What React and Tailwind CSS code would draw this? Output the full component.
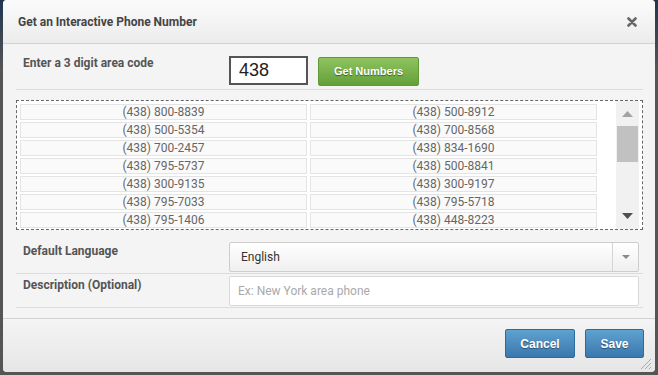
import React from "react";

const numbers = [
  ["(438) 800-8839", "(438) 500-8912"],
  ["(438) 500-5354", "(438) 700-8568"],
  ["(438) 700-2457", "(438) 834-1690"],
  ["(438) 795-5737", "(438) 500-8841"],
  ["(438) 300-9135", "(438) 300-9197"],
  ["(438) 795-7033", "(438) 795-5718"],
  ["(438) 795-1406", "(438) 448-8223"],
];

export default function App() {
  return (
    <div
      className="w-[658px] h-[375px] px-[3px] pb-[3px] bg-[linear-gradient(to_bottom,#1f3550,#555_70px)] overflow-hidden"
      style={{ fontFamily: "Roboto, 'Liberation Sans', sans-serif" }}
    >
      <div className="w-[652px] h-[372px] rounded-[4px] bg-[#f4f4f4] flex flex-col overflow-hidden relative">
        {/* header */}
        <div className="h-[44px] shrink-0 flex items-center justify-between pl-[15px] pr-[13px] border-b border-[#d2d2d2] bg-[linear-gradient(to_bottom,#fbfbfb,#ececec)]">
          <span className="text-[12px] font-bold text-[#444] mt-[1px]">Get an Interactive Phone Number</span>
          <svg width="10" height="10" viewBox="0 0 10 10" className="mt-[1px] mr-[5px]">
            <path d="M1.5 1.5 L8.5 8.5 M8.5 1.5 L1.5 8.5" stroke="#666" strokeWidth="2.6" strokeLinecap="round" />
          </svg>
        </div>

        {/* body */}
        <div className="flex-1 pl-[13px] pr-[12px]">
          <div className="flex items-start pl-[7px] pt-[12px] h-[46px] border-b border-[#dcdcdc]">
            <span className="w-[206px] text-[12px] font-bold text-[#555] leading-[14px]">Enter a 3 digit area code</span>
            <div
              className="w-[79px] h-[29px] border-2 border-[#555] bg-white flex items-center pl-[8px] text-[18px] text-[#222]"
              style={{ fontFamily: "'Liberation Sans', Arial, sans-serif" }}
            >
              438
            </div>
            <button
              className="ml-[10px] mt-[1px] w-[101px] h-[29px] rounded-[2px] border border-[#5f9a37] bg-[linear-gradient(to_bottom,#8fc35f,#64a03a)] text-white text-[11px] font-bold [text-shadow:0_1px_1px_rgba(0,0,0,0.45)]"
              style={{ fontFamily: "'Liberation Sans', Arial, sans-serif" }}
            >
              Get Numbers
            </button>
          </div>

          <div className="mt-[10px] h-[130px] border border-dashed border-[#666] bg-white flex pl-[3px] pt-[3px]">
            <div className="w-[577px] grid grid-cols-2 gap-x-[3px] gap-y-[2px] content-start">
              {numbers.map((row, i) =>
                row.map((n, j) => (
                  <div
                    key={i + "-" + j}
                    className="h-[16px] border border-[#e4e4e4] bg-[#fafafa] flex items-center justify-center text-[12px] text-[#666] leading-none"
                  >
                    {n}
                  </div>
                ))
              )}
            </div>
            <div className="ml-[19px] -mt-[3px] w-[23px] h-[128px] bg-[#f1f1f1] flex flex-col items-center">
              <svg width="11" height="6" viewBox="0 0 11 6" className="mt-[10px]">
                <path d="M0 6 L5.5 0 L11 6 Z" fill="#a3a3a3" />
              </svg>
              <div className="mt-[9px] w-[21px] h-[36px] bg-[#c1c1c1]" />
              <div className="flex-1" />
              <svg width="11" height="6" viewBox="0 0 11 6" className="mb-[10px]">
                <path d="M0 0 L11 0 L5.5 6 Z" fill="#505050" />
              </svg>
            </div>
          </div>

          <div className="mt-[12px] flex items-start pl-[7px] h-[32px] border-b border-[#dcdcdc]">
            <span className="w-[206px] pt-[2px] text-[12px] font-bold text-[#555] leading-[14px]">Default Language</span>
            <div className="w-[410px] h-[30px] rounded-[2px] border border-[#cdcdcd] bg-[linear-gradient(to_bottom,#ffffff,#efefef)] flex items-center">
              <span className="flex-1 pl-[11px] text-[12px] text-[#333]">English</span>
              <div className="w-[26px] h-full border-l border-[#d4d4d4] flex items-center justify-center">
                <svg width="8" height="4" viewBox="0 0 8 4">
                  <path d="M0 0 L8 0 L4 4 Z" fill="#888" />
                </svg>
              </div>
            </div>
          </div>

          <div className="mt-[2px] flex items-start pl-[7px] h-[32px] border-b border-[#dcdcdc]">
            <span className="w-[206px] pt-[2px] text-[12px] font-bold text-[#555] leading-[14px]">Description (Optional)</span>
            <div className="w-[410px] h-[30px] rounded-[2px] border border-[#d9d9d9] bg-white flex items-center pl-[8px] text-[12px] text-[#aaa]">
              Ex: New York area phone
            </div>
          </div>
        </div>

        {/* footer */}
        <div className="h-[54px] shrink-0 border-t border-[#d2d2d2] bg-[linear-gradient(to_bottom,#f4f4f4,#e6e6e6)] flex justify-end items-start pt-[10px] pr-[11px] gap-[10px]">
          {["Cancel", "Save"].map((t) => (
            <button
              key={t}
              className={
                (t === "Cancel" ? "w-[70px]" : "w-[59px]") +
                " h-[29px] rounded-[2px] border border-[#2f6a9e] bg-[linear-gradient(to_bottom,#5ea2cf,#3b77ad)] text-white text-[12px] font-bold [text-shadow:0_1px_1px_rgba(0,0,0,0.4)]"
              }
              style={{ fontFamily: "'Liberation Sans', Arial, sans-serif" }}
            >
              {t}
            </button>
          ))}
        </div>

        <svg width="12" height="12" viewBox="0 0 12 12" className="absolute right-[3px] bottom-[2px]">
          <path d="M11 1 L1 11 M11 5 L5 11 M11 9 L9 11" stroke="#aaa" strokeWidth="1" />
        </svg>
      </div>
    </div>
  );
}
